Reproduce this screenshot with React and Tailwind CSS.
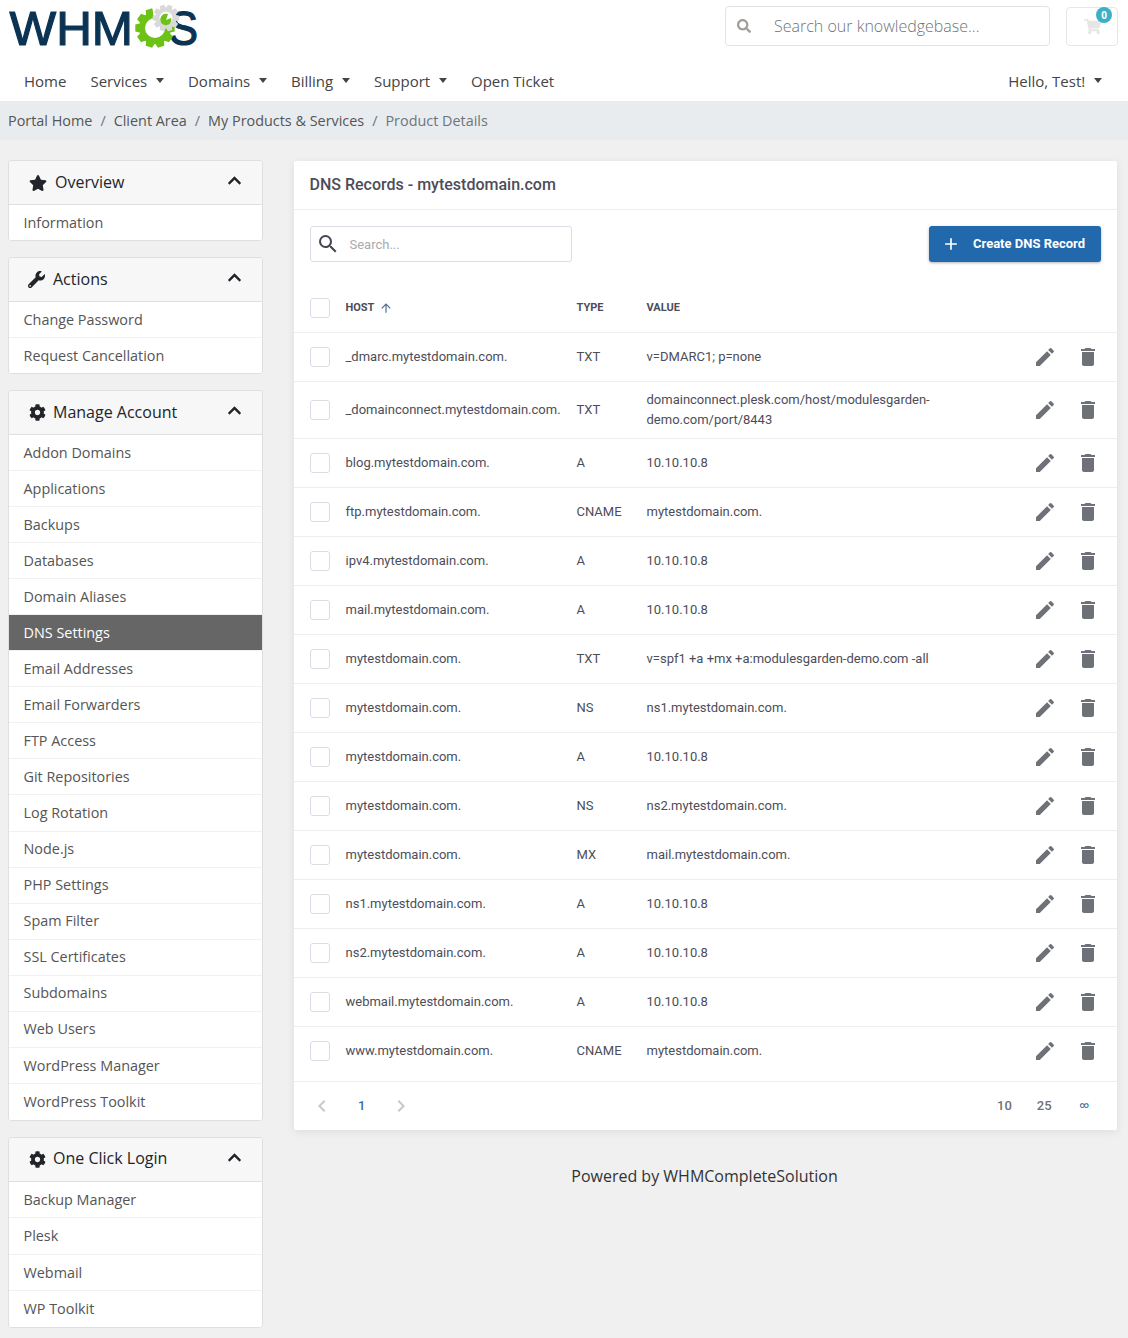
import React from "react";
import { FaStar, FaWrench, FaCog, FaChevronUp, FaSearch, FaShoppingCart } from "react-icons/fa";
import { MdEdit, MdDelete, MdSearch, MdAdd, MdArrowUpward, MdChevronLeft, MdChevronRight } from "react-icons/md";

const navItems = [
  { label: "Home" },
  { label: "Services", caret: true },
  { label: "Domains", caret: true },
  { label: "Billing", caret: true },
  { label: "Support", caret: true },
  { label: "Open Ticket" },
];

const sidebar = [
  { title: "Overview", rowClass: "h-9", icon: <FaStar className="text-[18px] mr-[8px]" />, items: ["Information"] },
  {
    title: "Actions",
    rowClass: "h-9",
    icon: <FaWrench className="text-[17px] -ml-px mr-2" />,
    items: ["Change Password", "Request Cancellation"],
  },
  {
    title: "Manage Account",
    rowClass: "h-[36.06px] last:h-[37px]",
    icon: <FaCog className="text-[17px] mr-[7px]" />,
    items: [
      "Addon Domains", "Applications", "Backups", "Databases", "Domain Aliases", "DNS Settings",
      "Email Addresses", "Email Forwarders", "FTP Access", "Git Repositories", "Log Rotation", "Node.js",
      "PHP Settings", "Spam Filter", "SSL Certificates", "Subdomains", "Web Users", "WordPress Manager",
      "WordPress Toolkit",
    ],
  },
  {
    title: "One Click Login",
    rowClass: "h-[36.5px]",
    icon: <FaCog className="text-[17px] mr-[7px]" />,
    items: ["Backup Manager", "Plesk", "Webmail", "WP Toolkit"],
  },
];

const records = [
  ["_dmarc.mytestdomain.com.", "TXT", "v=DMARC1; p=none"],
  ["_domainconnect.mytestdomain.com.", "TXT", "domainconnect.plesk.com/host/modulesgarden-demo.com/port/8443"],
  ["blog.mytestdomain.com.", "A", "10.10.10.8"],
  ["ftp.mytestdomain.com.", "CNAME", "mytestdomain.com."],
  ["ipv4.mytestdomain.com.", "A", "10.10.10.8"],
  ["mail.mytestdomain.com.", "A", "10.10.10.8"],
  ["mytestdomain.com.", "TXT", "v=spf1 +a +mx +a:modulesgarden-demo.com -all"],
  ["mytestdomain.com.", "NS", "ns1.mytestdomain.com."],
  ["mytestdomain.com.", "A", "10.10.10.8"],
  ["mytestdomain.com.", "NS", "ns2.mytestdomain.com."],
  ["mytestdomain.com.", "MX", "mail.mytestdomain.com."],
  ["ns1.mytestdomain.com.", "A", "10.10.10.8"],
  ["ns2.mytestdomain.com.", "A", "10.10.10.8"],
  ["webmail.mytestdomain.com.", "A", "10.10.10.8"],
  ["www.mytestdomain.com.", "CNAME", "mytestdomain.com."],
];

// Builds a cog outline for the logo
const gearPath = (cx, cy, outer, inner, teeth) => {
  const step = (Math.PI * 2) / teeth;
  const points = [];
  for (let i = 0; i < teeth; i++) {
    const a = i * step;
    [
      [inner, -0.5],
      [outer, -0.3],
      [outer, 0.3],
      [inner, 0.5],
    ].forEach(([r, t]) => {
      const angle = a + t * step * 0.9;
      points.push(`${(cx + r * Math.cos(angle)).toFixed(2)} ${(cy + r * Math.sin(angle)).toFixed(2)}`);
    });
  }
  return `M${points.join("L")}Z`;
};

const Logo = () => (
  <svg width="200" height="60" viewBox="0 0 200 60" className="block">
    <text x="9.5" y="45" fontFamily="'Liberation Sans', sans-serif" fontSize="48" fill="#0b3353" stroke="#0b3353" strokeWidth="1.2" textLength="123.5" lengthAdjust="spacingAndGlyphs">
      WHM
    </text>
    <text x="169" y="45" fontFamily="'Liberation Sans', sans-serif" fontSize="48" fill="#0b3353" stroke="#0b3353" strokeWidth="1.2" textLength="29" lengthAdjust="spacingAndGlyphs">
      S
    </text>
    <path d={gearPath(155, 28, 20, 16, 10)} fill="#6cc217" />
    <circle cx="155" cy="28" r="10" fill="#fff" />
    <path d="M155 28 L176 26 L170 4 L152 4 Z" fill="#fff" />
    <path d={gearPath(166, 18, 13.5, 10.5, 10)} fill="#d9d9d9" />
    <circle cx="166" cy="18" r="6.5" fill="#fff" />
    <path d="M161 17 A5.5 5.5 0 1 0 171 18 L166 20 L168 14 A5.5 5.5 0 0 0 161 17 Z" fill="#6cc217" />
  </svg>
);

const Caret = () => (
  <span className="ml-[8.75px] inline-block w-0 h-0 border-x-[4.5px] border-x-transparent border-t-[5px] border-t-[#444] relative -top-px" />
);

const SidebarPanel = ({ title, icon, items, rowClass }) => (
  <div className="border-x border-t border-[#dfdfdf] rounded-[4px] bg-white mb-4 overflow-hidden">
    <div className="h-[44px] flex items-center bg-[#f7f7f7] border-b border-[#dfdfdf] pl-5 pr-[20px] text-[#212529]">
      {icon}
      <span className="text-[16px] leading-6 relative -top-px">{title}</span>
      <FaChevronUp className="ml-auto text-[15px] relative -top-[2px]" />
    </div>
    {items.map((item, i) => (
      <div
        key={item}
        className={`${rowClass} flex items-center px-[14.5px] text-[14.4px] border-b ${
          i === items.length - 1 ? "border-[#dfdfdf]" : "border-[#f1f1f1]"
        } ${item === "DNS Settings" ? "bg-[#666] text-white" : "text-[#555]"}`}
      >
        {item}
      </div>
    ))}
  </div>
);

const Checkbox = () => (
  <span className="block w-5 h-5 rounded-[3px] border border-[#dcdce6] bg-white" />
);

const RecordRow = ({ host, type, value, last }) => (
  <div className={`flex items-center border-b border-[#eeeef2] text-[13px] leading-5 text-[#4d4d59] pl-4 pr-[17px] ${last ? "h-[55px] pb-[6px]" : "min-h-[49px]"}`}>
    <div className="w-[35.5px] shrink-0">
      <Checkbox />
    </div>
    <div className="w-[231px] shrink-0">{host}</div>
    <div className="w-[70px] shrink-0">{type}</div>
    <div className="w-[300px] shrink-0 py-2">{value}</div>
    <div className="ml-auto flex items-center text-[#6f7178] text-[24px]">
      <MdEdit className="mr-[19px]" />
      <MdDelete />
    </div>
  </div>
);

export default function App() {
  return (
    <div className="min-h-[1338px] bg-[#f0f0f0] font-['Open_Sans',sans-serif] text-[#444]">
      <header className="bg-white h-[101px]">
        <div className="h-[62px] flex items-start">
          <Logo />
          <div className="ml-auto mt-[6px] w-[325px] h-10 border border-[#e3e3e3] rounded-[4px] flex items-center pl-[11px] text-[#999]">
            <FaSearch className="text-[14px] mr-[23px] text-[#a09d9a]" />
            <span className="text-[16px] font-light text-[#6c757d]">Search our knowledgebase...</span>
          </div>
          <div className="relative ml-4 mr-[10px] mt-[7px] w-[52px] h-[39px] border border-[#e6e6e6] rounded-[4px] flex items-center justify-center text-[#e6e6e6]">
            <FaShoppingCart className="text-[17px]" />
            <span className="absolute -top-[1px] right-[5px] w-4 h-4 rounded-full bg-[#3cb0c4] text-white text-[10px] font-bold flex items-center justify-center">0</span>
          </div>
        </div>
        <nav className="flex items-center h-[39px] pl-6 pr-[26px] text-[15px] text-[#444]">
          {navItems.map((item) => (
            <span key={item.label} className="mr-6 flex items-center">
              {item.label}
              {item.caret && <Caret />}
            </span>
          ))}
          <span className="ml-auto flex items-center">
            Hello, Test!
            <Caret />
          </span>
        </nav>
      </header>

      <div className="h-[39px] bg-[#e9ecef] flex items-center px-2 text-[14.4px] text-[#555]">
        <span>Portal Home</span>
        <span className="mx-2 text-[#6c757d]">/</span>
        <span>Client Area</span>
        <span className="mx-2 text-[#6c757d]">/</span>
        <span>My Products &amp; Services</span>
        <span className="mx-2 text-[#6c757d]">/</span>
        <span className="text-[#6c757d]">Product Details</span>
      </div>

      <div className="flex items-start pt-5 pl-2 pr-[11px]">
        <aside className="w-[255px] shrink-0">
          {sidebar.map((panel) => (
            <SidebarPanel key={panel.title} {...panel} />
          ))}
        </aside>

        <main className="ml-[31px] flex-1 pt-px font-['Roboto',sans-serif]">
          <div className="bg-white rounded-[2px] shadow-[0_2px_8px_rgba(0,0,0,0.08)]">
            <div className="h-[49px] border-b border-[#eeeef2] flex items-center px-[15.5px] text-[16px] font-medium text-[#4d4d59]">
              DNS Records - mytestdomain.com
            </div>
            <div className="flex items-center justify-between pl-4 pr-4 pt-4">
              <div className="w-[262px] h-9 border border-[#dcdce6] rounded-[3px] flex items-center pl-[5px] text-[#454550]">
                <MdSearch className="text-[24px] mr-[9.5px]" />
                <span className="text-[13px] text-[#aaa] pt-[2px]">Search...</span>
              </div>
              <div className="w-[172px] h-9 rounded-[3px] bg-[#2268ac] text-white text-[13px] font-bold flex items-center pl-[12px] shadow-[0_1px_3px_rgba(0,0,0,0.3)]">
                <MdAdd className="text-[20px] mr-[12px]" />
                Create DNS Record
              </div>
            </div>

            <div className="flex items-center h-[71px] pt-[21px] border-b border-[#eeeef2] pl-4 pr-4 text-[11px] font-bold text-[#4d4d59]">
              <div className="w-[35.5px] shrink-0">
                <Checkbox />
              </div>
              <div className="w-[231px] shrink-0 flex items-center pt-[2px]">
                HOST
                <MdArrowUpward className="ml-[5px] text-[14px] text-[#4f6f8f] -mt-[2px]" />
              </div>
              <div className="w-[70px] shrink-0 pt-[2px]">TYPE</div>
              <div className="pt-[2px]">VALUE</div>
            </div>

            {records.map(([host, type, value], i) => (
              <RecordRow key={i} host={host} type={type} value={value} last={i === records.length - 1} />
            ))}

            <div className="h-[48px] flex items-center pl-[18px] pr-[28px] text-[13px] font-medium text-[#6f7178]">
              <MdChevronLeft className="text-[24px] text-[#c8c8c8] -ml-[2px]" />
              <span className="ml-6 text-[#3a6ea5]">1</span>
              <MdChevronRight className="text-[24px] text-[#c8c8c8] ml-6" />
              <span className="ml-auto">10</span>
              <span className="ml-[25px]">25</span>
              <span className="ml-[28px] text-[9px] text-[#3a6ea5]">∞</span>
            </div>
          </div>
          <div className="mt-[34px] pr-[2px] text-center text-[16px] text-[#333] font-['Open_Sans',sans-serif]">
            Powered by WHMCompleteSolution
          </div>
        </main>
      </div>
    </div>
  );
}
